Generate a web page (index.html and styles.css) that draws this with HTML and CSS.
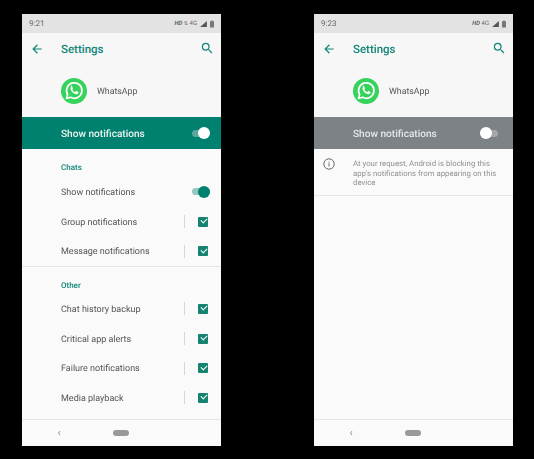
FILE: index.html
```html
<!DOCTYPE html>
<html lang="en">
<head>
<meta charset="utf-8">
<title>WhatsApp notification settings</title>
<link rel="stylesheet" href="styles.css">
</head>
<body>
<div class="stage">
  <section class="phone">
    <div class="status">
      <span class="time">9:21</span>
      <span class="indicators"><b>HD</b><span class="arrows">⇅</span><span>4G</span>
        <svg class="signal" viewBox="0 0 9 8"><path d="M0 8 9 0v8z"/></svg>
        <svg class="battery" viewBox="0 0 5 9"><path d="M1.500 0h2v1H5v8H0V1h1.500z"/></svg>
      </span>
    </div>
    <header class="appbar">
      <svg class="icon" viewBox="0 0 24 24"><path d="M20 11H7.830l5.590-5.590L12 4l-8 8 8 8 1.410-1.410L7.830 13H20z"/></svg>
      <h1>Settings</h1>
      <svg class="icon search" viewBox="0 0 24 24"><path d="M15.500 14h-.79l-.28-.27A6.471 6.471 0 0 0 16 9.500 6.500 6.500 0 1 0 9.500 16c1.610 0 3.090-.59 4.230-1.570l.27.28v.79l5 4.990L20.490 19l-4.990-5zm-6 0C7.010 14 5 11.990 5 9.500S7.010 5 9.500 5 14 7.010 14 9.500 11.990 14 9.500 14z"/></svg>
    </header>
    <div class="app">
      <svg class="logo" viewBox="0 0 26 26">
        <circle cx="13" cy="13" r="13" fill="#35d25c"/>
        <path d="M5.500 20.500l1.100-4.100a7.700 7.700 0 1 1 3 2.900z" fill="none" stroke="#fff" stroke-width="1.700" stroke-linejoin="round"/>
        <path d="M10.300 8.800c-.9.700-1 2-.3 3.400 1 1.900 2.600 3.300 4.400 3.900 1.300.4 2.500 0 3-1 .2-.5.200-.9 0-1l-1.900-1c-.3-.1-.5 0-.7.300l-.6.700c-1-.3-2.300-1.500-2.900-2.700l.5-.6c.2-.2.200-.4.100-.6l-.8-1.900c-.2-.5-.7-.6-1.800-.4z" fill="#fff"/>
      </svg>
      <span>WhatsApp</span>
    </div>
    <div class="banner on">
      <span>Show notifications</span>
      <span class="switch white on"><i></i></span>
    </div>
    <div class="content">
      <h2 class="first">Chats</h2>
      <div class="row"><span>Show notifications</span><span class="switch teal on"><i></i></span></div>
      <div class="row"><span>Group notifications</span><span class="sep"></span><span class="check"></span></div>
      <div class="row"><span>Message notifications</span><span class="sep"></span><span class="check"></span></div>
      <hr>
      <h2>Other</h2>
      <div class="row"><span>Chat history backup</span><span class="sep"></span><span class="check"></span></div>
      <div class="row"><span>Critical app alerts</span><span class="sep"></span><span class="check"></span></div>
      <div class="row"><span>Failure notifications</span><span class="sep"></span><span class="check"></span></div>
      <div class="row"><span>Media playback</span><span class="sep"></span><span class="check"></span></div>
    </div>
    <nav class="nav"><span class="back">‹</span><span class="home"></span></nav>
  </section>

  <section class="phone">
    <div class="status">
      <span class="time">9:23</span>
      <span class="indicators"><b>HD</b><span>4G</span>
        <svg class="signal" viewBox="0 0 9 8"><path d="M0 8 9 0v8z"/></svg>
        <svg class="battery" viewBox="0 0 5 9"><path d="M1.500 0h2v1H5v8H0V1h1.500z"/></svg>
      </span>
    </div>
    <header class="appbar">
      <svg class="icon" viewBox="0 0 24 24"><path d="M20 11H7.830l5.590-5.590L12 4l-8 8 8 8 1.410-1.410L7.830 13H20z"/></svg>
      <h1>Settings</h1>
      <svg class="icon search" viewBox="0 0 24 24"><path d="M15.500 14h-.79l-.28-.27A6.471 6.471 0 0 0 16 9.500 6.500 6.500 0 1 0 9.500 16c1.610 0 3.090-.59 4.230-1.570l.27.28v.79l5 4.990L20.490 19l-4.990-5zm-6 0C7.010 14 5 11.990 5 9.500S7.010 5 9.500 5 14 7.010 14 9.500 11.990 14 9.500 14z"/></svg>
    </header>
    <div class="app">
      <svg class="logo" viewBox="0 0 26 26">
        <circle cx="13" cy="13" r="13" fill="#35d25c"/>
        <path d="M5.500 20.500l1.100-4.100a7.700 7.700 0 1 1 3 2.900z" fill="none" stroke="#fff" stroke-width="1.700" stroke-linejoin="round"/>
        <path d="M10.300 8.800c-.9.700-1 2-.3 3.400 1 1.900 2.600 3.300 4.400 3.900 1.300.4 2.500 0 3-1 .2-.5.200-.9 0-1l-1.900-1c-.3-.1-.5 0-.7.300l-.6.700c-1-.3-2.300-1.500-2.900-2.700l.5-.6c.2-.2.200-.4.100-.6l-.8-1.900c-.2-.5-.7-.6-1.800-.4z" fill="#fff"/>
      </svg>
      <span>WhatsApp</span>
    </div>
    <div class="banner off">
      <span>Show notifications</span>
      <span class="switch white off"><i></i></span>
    </div>
    <div class="content">
      <div class="notice">
        <svg class="info" viewBox="0 0 12 12"><circle cx="6" cy="6" r="5.200" fill="none" stroke="#6a6a6a" stroke-width="1"/><path d="M5.500 5.300h1v3.200h-1zM5.500 3.500h1v1h-1z" fill="#6a6a6a"/></svg>
        <p>At your request, Android is blocking this app's notifications from appearing on this device</p>
      </div>
    </div>
    <nav class="nav"><span class="back">‹</span><span class="home"></span></nav>
  </section>
</div>
</body>
</html>
```

FILE: styles.css
```css
* { box-sizing: border-box; }

html, body {
  margin: 0;
  height: 100%;
  background: #000;
}

body {
  font-family: Roboto, "Liberation Sans", sans-serif;
  color: #4a4a4a;
  overflow: hidden;
  text-rendering: geometricPrecision;
}

.stage {
  display: flex;
  gap: 93.500px;
  padding: 14px 0 0 22px;
  filter: blur(0.35px);
}

.phone {
  width: 198.500px;
  height: 432px;
  display: flex;
  flex-direction: column;
  background: #fafafa;
}

.status {
  height: 19px;
  flex: none;
  display: flex;
  align-items: center;
  justify-content: space-between;
  padding: 0 6.500px 0 7px;
  background: #e3e3e3;
  color: #666;
}

.time { font-size: 8px; }

.indicators {
  display: flex;
  align-items: center;
  gap: 1.500px;
  font-size: 6px;
}

.indicators b { font-weight: 700; font-style: italic; }
.arrows { font-size: 5px; }

.signal { width: 7px; height: 6px; fill: #555; margin-left: 1px; }
.battery { width: 4px; height: 8px; fill: #777; margin-left: 2px; }

.appbar {
  height: 33px;
  flex: none;
  display: flex;
  align-items: center;
  padding: 0 5.700px 2px 8.300px;
  background: #f7f7f7;
}

.icon { width: 14px; height: 14px; fill: #0f8677; flex: none; }
.search { width: 14.500px; height: 14.500px; margin-left: auto; }

.appbar h1 {
  margin: 0 0 0 16.700px;
  font-size: 11.500px;
  font-weight: 500;
  color: #0f8677;
}

.app {
  height: 51px;
  flex: none;
  display: flex;
  align-items: center;
  gap: 10px;
  padding: 0 0 1px 39px;
  background: #f7f7f7;
  font-size: 8.800px;
  color: #555;
}

.app span { padding-top: 2px; }

.logo { width: 26px; height: 26px; flex: none; }

.banner {
  height: 32px;
  flex: none;
  display: flex;
  align-items: center;
  justify-content: space-between;
  padding: 0 10.500px 0 39px;
  font-size: 10.100px;
  font-weight: 500;
  color: #eef3f2;
}

.banner > span:first-child { padding-top: 2px; }

.banner.on { background: #00816f; }
.banner.off { background: #7d8286; color: #e6e8e9; }

.switch {
  position: relative;
  display: block;
  width: 18px;
  height: 7px;
  border-radius: 4px;
}

.switch i {
  position: absolute;
  top: -2.500px;
  width: 12px;
  height: 12px;
  border-radius: 50%;
}

.switch.on i { right: 0; }
.switch.off i { left: 0; }
.switch.off { margin-right: 4px; }
.switch.white i { background: #fff; }
.switch.white.on { background: #5ba89c; }
.switch.white.off { background: #a4a7aa; }
.switch.teal { background: #93c6bd; }
.switch.teal i { background: #00816f; }

.content {
  flex: 1;
  min-height: 0;
  background: #fafafa;
}

h2 {
  margin: 0;
  height: 16.500px;
  padding: 3px 0 0 39px;
  font-size: 8px;
  font-weight: 500;
  line-height: 10px;
  color: #0f8677;
  margin-top: 10.500px;
}

h2.first { height: 17px; margin-top: 11px; }

.row {
  height: 29.700px;
  display: flex;
  align-items: center;
  padding: 0 10.500px 0 39px;
  font-size: 9px;
  color: #555;
}

.row > span:first-child { margin-right: auto; padding-top: 2px; }

.sep {
  width: 1px;
  height: 13px;
  margin-right: 13px;
  background: #d5d5d5;
}

.check {
  position: relative;
  width: 10px;
  height: 10px;
  margin-right: 2px;
  border-radius: 1px;
  background: #14836f;
}

.check::after {
  content: "";
  position: absolute;
  left: 2.500px;
  top: 1.500px;
  width: 5px;
  height: 3px;
  border-left: 1.200px solid #fff;
  border-bottom: 1.200px solid #fff;
  transform: rotate(-45deg);
}

hr {
  margin: 0;
  border: 0;
  border-top: 1px solid #e5e5e5;
}

.notice {
  display: flex;
  height: 47px;
  padding: 9px 10px 0 9px;
  border-bottom: 1px solid #e5e5e5;
}

.info { width: 12px; height: 12px; flex: none; }

.notice p {
  margin: 1px 0 0 18px;
  font-size: 7.800px;
  line-height: 9.500px;
  color: #909090;
}

.nav {
  height: 27px;
  flex: none;
  position: relative;
  display: flex;
  align-items: center;
  justify-content: center;
  background: #fafafa;
  border-top: 1px solid #e5e5e5;
}

.home {
  width: 16px;
  height: 6px;
  border-radius: 3px;
  background: #999;
}

.back {
  position: absolute;
  left: 35.500px;
  top: 5.500px;
  font-size: 11px;
  line-height: 14px;
  color: #8a8a8a;
}
```
